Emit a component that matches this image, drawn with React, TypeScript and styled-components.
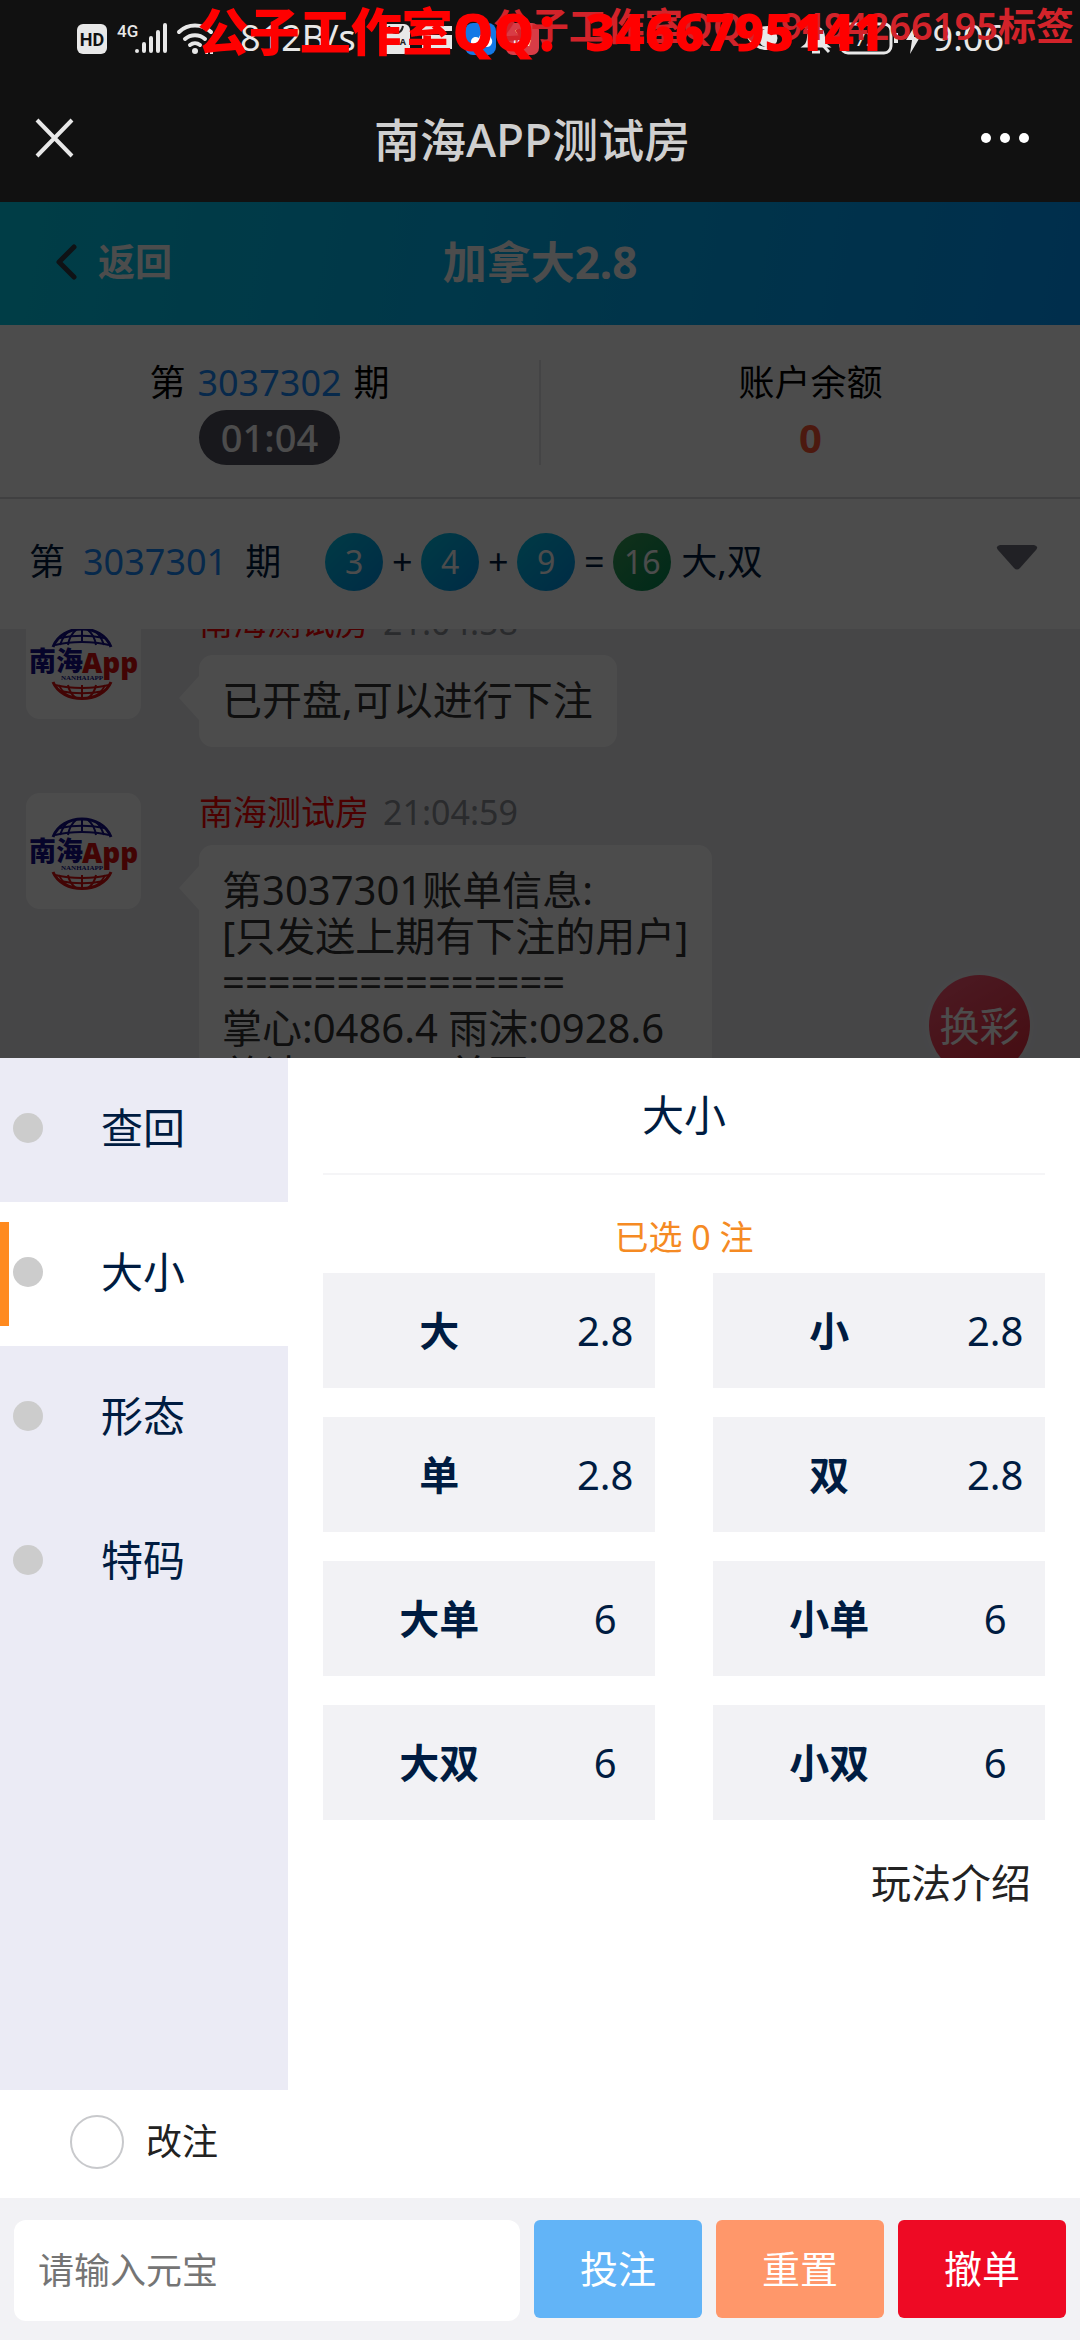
import React from 'react';
import styled, { createGlobalStyle } from 'styled-components';

const GlobalStyle = createGlobalStyle`
  * {
    box-sizing: border-box;
  }

  body {
    margin: 0;
    background: #fff;
    font-family: "Noto Sans", "Noto Sans CJK SC", sans-serif;
    color: #001c41;
  }

  button,
  input {
    font-family: inherit;
    border: 0;
    padding: 0;
    margin: 0;
  }

  button {
    background: none;
    color: inherit;
    cursor: pointer;
  }
`;

const Page = styled.div`
  position: relative;
  display: flex;
  flex-direction: column;
  min-height: 100vh;
`;

/* ---------- phone status bar + webview title ---------- */

const TopBar = styled.header`
  flex: none;
  background: #111;
  color: #e8e8e8;
`;

const StatusBar = styled.div`
  display: flex;
  justify-content: space-between;
  align-items: center;
  height: 76px;
  padding: 0 76px;
  font-size: 36px;
  line-height: 40px;
`;

const StatusGroup = styled.div<{ $gap: number }>`
  display: flex;
  align-items: center;
  gap: ${({ $gap }) => $gap}px;
`;

const Speed = styled.span`
  margin: 0 14px;
`;

const Watermark = styled.div<{ $main?: boolean }>`
  position: absolute;
  top: 0;
  right: ${({ $main }) => ($main ? 196 : 6)}px;
  font-size: ${({ $main }) => ($main ? 51 : 38)}px;
  font-weight: ${({ $main }) => ($main ? 900 : 600)};
  line-height: ${({ $main }) => ($main ? 62 : 50)}px;
  color: ${({ $main }) => ($main ? '#ff0000' : '#d2232a')};
  white-space: nowrap;
  pointer-events: none;
`;

const TitleBar = styled.div`
  display: grid;
  grid-template-columns: 1fr auto 1fr;
  align-items: center;
  height: 126px;
  padding: 0 50px 0 34px;

  button {
    height: 44px;
    line-height: 0;
  }

  button:first-child {
    justify-self: start;
  }

  button:last-child {
    justify-self: end;
  }
`;

const WebTitle = styled.h1`
  margin: 0;
  font-size: 46px;
  font-weight: 500;
  line-height: 60px;
  color: #cfcfcf;
`;

/* ---------- room behind the popup ---------- */

const Room = styled.main`
  position: relative;
  flex: 1 0 856px;
  height: 856px;
  display: flex;
  flex-direction: column;
  overflow: hidden;
`;

const Backdrop = styled.div`
  position: absolute;
  inset: 0;
  background: rgba(0, 0, 0, 0.7);
`;

const NavBar = styled.div`
  display: grid;
  grid-template-columns: 1fr auto 1fr;
  align-items: center;
  flex: none;
  height: 123px;
  padding: 0 54px 4px;
  color: #fff;
  background: linear-gradient(100deg, #00cdeb, #009bff);
`;

const BackButton = styled.button`
  display: flex;
  align-items: center;
  gap: 20px;
  font-size: 37px;
  font-weight: 700;
  line-height: 50px;
`;

const NavTitle = styled.h2`
  margin: 0;
  font-size: 44px;
  font-weight: 700;
  line-height: 60px;
`;

const InfoPanel = styled.section`
  display: flex;
  flex: none;
  height: 174px;
  padding: 35px 0 32px;
  background: #fff;
  border-bottom: 2px solid #d7d7da;
`;

const InfoCell = styled.div`
  flex: 1;
  display: flex;
  flex-direction: column;
  align-items: center;
  font-size: 36px;
  line-height: 46px;
  color: #000;

  & + & {
    border-left: 2px solid #e4e4e8;
  }
`;

const IssueNo = styled.span`
  margin: 0 12px;
  color: #1989fa;
`;

const Countdown = styled.time`
  margin-top: 4px;
  width: 141px;
  border-radius: 28px;
  background: #50505f;
  color: #fff;
  font-size: 38px;
  font-weight: 500;
  line-height: 55px;
  text-align: center;
`;

const Balance = styled.strong`
  margin-top: 4px;
  font-size: 40px;
  line-height: 55px;
  color: #ff5533;
`;

const ResultRow = styled.section`
  display: flex;
  align-items: center;
  flex: none;
  height: 130px;
  padding: 0 42px 4px 29px;
  background: #fff;
  font-size: 36px;
  line-height: 46px;

  ${IssueNo} {
    margin: 0 18px;
  }
`;

const Balls = styled.div`
  display: flex;
  align-items: center;
  margin-left: 44px;
`;

const Ball = styled.span<{ $sum?: boolean }>`
  width: 58px;
  border-radius: 50%;
  background: ${({ $sum }) =>
    $sum ? 'linear-gradient(135deg, #3ca35a, #008a55)' : 'linear-gradient(135deg, #00c3e6, #0091e6)'};
  color: #fff;
  font-size: 32px;
  line-height: 58px;
  text-align: center;
`;

const Operator = styled.span`
  width: 38px;
  text-align: center;
`;

const Verdict = styled.span`
  margin-left: 10px;
`;

const ExpandButton = styled.button`
  margin-left: auto;
  line-height: 0;
`;

const Chat = styled.section`
  flex: 1;
  min-height: 0;
  overflow: hidden;
  background: #ebebef;
`;

/* the list is scrolled a little below its first message */
const MessageList = styled.div`
  display: flex;
  flex-direction: column;
  gap: 46px;
  margin-top: -26px;
  padding: 0 26px;
`;

const MessageItem = styled.article`
  display: flex;
  align-items: flex-start;
  gap: 58px;
`;

const Avatar = styled.svg`
  flex: none;
  width: 115px;
  height: 116px;
  border-radius: 14px;
  background: #fff;
`;

const MessageMeta = styled.div`
  display: flex;
  gap: 14px;
  margin-bottom: 14px;
  font-size: 34px;
  line-height: 38px;
  color: #8c8f96;
`;

const Sender = styled.span`
  color: #ff0000;
`;

const Bubble = styled.div`
  position: relative;
  width: fit-content;
  padding: 22px 24px 24px 23px;
  border-radius: 14px;
  background: #fff;
  color: #323233;
  font-size: 40px;
  line-height: 46px;
  white-space: pre;

  &::before {
    content: "";
    position: absolute;
    left: -20px;
    top: 21px;
    border: solid transparent;
    border-width: 22px 20px 22px 0;
    border-right-color: #fff;
  }
`;

const SwitchButton = styled.button`
  position: absolute;
  right: 50px;
  top: 773px;
  width: 101px;
  height: 101px;
  border-radius: 50%;
  background: linear-gradient(150deg, #ff5a78, #e62837);
  box-shadow: 0 0 20px rgba(255, 255, 255, 0.3);
  color: #fff;
  font-size: 40px;
  line-height: 98px;
`;

/* ---------- betting popup ---------- */

const Sheet = styled.section`
  flex: none;
  background: #fff;
`;

const SheetBody = styled.div`
  display: flex;
  min-height: 1032px;
`;

const Menu = styled.nav`
  flex: none;
  width: 288px;
  background: #ebebf5;
`;

const MenuItem = styled.button<{ $active?: boolean }>`
  position: relative;
  display: flex;
  align-items: center;
  gap: 58px;
  width: 100%;
  height: 144px;
  padding: 0 0 4px 13px;
  background: ${({ $active }) => ($active ? '#fff' : 'transparent')};
  font-size: 42px;
  line-height: 56px;

  &::before {
    content: "";
    width: 30px;
    height: 30px;
    border-radius: 50%;
    background: #ccc;
  }

  &::after {
    content: "";
    position: absolute;
    left: 0;
    top: 20px;
    width: 9px;
    height: 104px;
    background: ${({ $active }) => ($active ? '#ff8a1f' : 'transparent')};
  }
`;

const Panel = styled.div`
  flex: 1;
  display: flex;
  flex-direction: column;
  padding: 0 35px;
`;

const PanelTitle = styled.h3`
  margin: 0;
  padding-bottom: 2px;
  border-bottom: 2px solid #f5f5f7;
  font-size: 42px;
  font-weight: 400;
  line-height: 113px;
  text-align: center;
`;

const Selected = styled.p`
  margin: 40px 0 14px;
  font-size: 34px;
  line-height: 44px;
  text-align: center;
  color: #f58a23;
`;

const OddsGrid = styled.div`
  display: grid;
  grid-template-columns: 1fr 1fr;
  gap: 29px 58px;
`;

const OddsButton = styled.button`
  display: grid;
  grid-template-columns: 7fr 3fr;
  align-items: center;
  height: 115px;
  background: #f2f2f5;
  font-size: 40px;
  line-height: 52px;
`;

const RulesLink = styled.a`
  align-self: flex-end;
  margin: 37px 14px 0;
  font-size: 40px;
  line-height: 52px;
  color: #222;
  text-decoration: none;
`;

const EditOption = styled.label`
  display: flex;
  align-items: center;
  gap: 22px;
  width: fit-content;
  height: 108px;
  padding: 0 0 4px 70px;
  font-size: 36px;
  line-height: 46px;
  color: #222;

  input {
    appearance: none;
    width: 54px;
    height: 54px;
    border: 2px solid #c8c9cc;
    border-radius: 50%;
  }

  input:checked {
    background: #1989fa;
  }
`;

const ActionBar = styled.form`
  display: flex;
  gap: 14px;
  height: 142px;
  padding: 22px 14px 19px;
  background: #f2f2f5;
`;

const AmountInput = styled.input`
  flex: 1;
  min-width: 0;
  padding: 0 24px;
  border-radius: 12px;
  background: #fff;
  font-size: 36px;

  &::placeholder {
    color: #757575;
  }
`;

const ActionButton = styled.button<{ $color: string }>`
  flex: none;
  width: 168px;
  height: 98px;
  padding-bottom: 6px;
  border-radius: 6px;
  background: ${({ $color }) => $color};
  color: #fff;
  font-size: 38px;
`;

const menu = ['查回', '大小', '形态', '特码'];

const odds = [
  ['大', '2.8'],
  ['小', '2.8'],
  ['单', '2.8'],
  ['双', '2.8'],
  ['大单', '6'],
  ['小单', '6'],
  ['大双', '6'],
  ['小双', '6'],
];

const messages = [
  { time: '21:04:58', text: '已开盘,可以进行下注' },
  {
    time: '21:04:59',
    text: '第3037301账单信息:\n[只发送上期有下注的用户]\n===============\n掌心:0486.4 雨沫:0928.6\n总计:1415.0 首页',
  },
];

const SignalIcons = () => (
  <svg width="140" height="36" viewBox="0 0 140 36" fill="#e8e8e8">
    <rect x="1" y="4" width="30" height="30" rx="6" />
    <text x="16" y="26" fontSize="18" fontFamily="Roboto" fontWeight="700" fill="#111" textAnchor="middle">HD</text>
    <text x="41" y="17" fontSize="17" fontFamily="Roboto" fontWeight="500">4G</text>
    <g stroke="#e8e8e8" strokeWidth="4" strokeLinecap="round">
      <path d="M61 31v0M68 31v-7M75 31v-13M82 31v-19M89 31V5" />
    </g>
    <g fill="none" stroke="#e8e8e8" strokeWidth="4" strokeLinecap="round">
      <path d="M103 12a23 23 0 0 1 32 0" />
      <path d="M109 19a15 15 0 0 1 20 0" />
      <path d="M114 25a8 8 0 0 1 10 0" />
    </g>
    <circle cx="119" cy="31" r="3" />
    <path d="M129 34v-6h3v6zM134 34v-9h3v9z" />
  </svg>
);

const AppIcons = () => (
  <svg width="160" height="36" viewBox="0 0 160 36">
    <rect x="1" y="4" width="29" height="30" rx="6" fill="#e8e8e8" />
    <path d="M9 6c1 5 4 7 7 7s6-2 7-7" fill="none" stroke="#222" strokeWidth="2" />
    <text x="16" y="25" fontSize="9" fontWeight="700" fill="#222" textAnchor="middle">HUA</text>
    <path d="M42 6h30v5H42zM42 15h30v14H62l-5 5-3-5H42z" fill="#e8e8e8" />
    <rect x="85" y="3" width="31" height="32" rx="8" fill="#1478e6" />
    <path d="M91 22c0-5 5-6 8-4 1-6 10-8 12 0 3 4 0 9-4 9H95c-3 0-4-2-4-5z" fill="#fff" />
    <rect x="126" y="3" width="33" height="32" rx="7" fill="#d83c46" />
    <path d="M136 10c2 5 11 5 13 0" fill="none" stroke="#fff" strokeWidth="2" />
    <text x="142" y="26" fontSize="9" fontWeight="700" fill="#fff" textAnchor="middle">JAW</text>
  </svg>
);

const SystemIcons = () => (
  <svg width="176" height="36" viewBox="0 0 176 36" fill="none" stroke="#e8e8e8" strokeWidth="3">
    <path d="M2 18c8-14 30-14 38 0-8 14-30 14-38 0z" />
    <circle cx="21" cy="18" r="8" fill="#e8e8e8" />
    <path d="M58 26c4-3 3-8 4-12 2-8 12-8 14 0 1 4 0 9 4 12z" fill="#e8e8e8" />
    <path d="M65 32h8M56 4l26 28" />
    <rect x="94" y="4" width="50" height="29" rx="7" />
    <path d="M149 13v10" strokeWidth="4" />
    <path d="M169 4l-10 16h6l-2 14 10-17h-6z" fill="#e8e8e8" stroke="none" />
    <text x="119" y="26" fontSize="20" fill="#e8e8e8" stroke="none" textAnchor="middle">72</text>
  </svg>
);

const RoomLogo = () => (
  <Avatar viewBox="0 0 115 116" role="img" aria-label="南海App">
    <g fill="none" stroke="#14108c" strokeWidth="2">
      <path d="M27 44C36 20 76 20 85 44" strokeWidth="3" />
      <path d="M34 35c14-3 30-3 44 0M29 42c16-4 38-4 54 0" />
      <path d="M56 26v14M50 27c-5 4-7 9-8 15M62 27c5 4 7 9 8 15M42 29c-5 4-6 8-8 13M70 29c5 4 6 8 8 13" />
    </g>
    <g fill="none" stroke="#dc0f0f" strokeWidth="2">
      <path d="M27 79c9 22 49 22 58 0" strokeWidth="3" />
      <path d="M29 82c16 4 38 4 54 0M34 88c14 3 30 3 44 0" />
      <path d="M56 82v14M42 82c1 6 4 10 8 13M70 82c-1 6-4 10-8 13M33 82c2 5 5 8 9 11M79 82c-2 5-5 8-9 11" />
    </g>
    <text x="3" y="68" fontSize="27" fontWeight="900" fill="#14108c">南海</text>
    <text x="56" y="70" fontSize="28" fontWeight="900" fill="#dc0f0f">App</text>
    <text x="35" y="77" fontSize="7" fontWeight="700" fontFamily="Liberation Serif" fill="#14108c">NANHAIAPP</text>
  </Avatar>
);

const App: React.FunctionComponent = () => {
  const [active, setActive] = React.useState('大小');

  return (
    <Page>
      <GlobalStyle />
      <TopBar>
        <StatusBar>
          <StatusGroup $gap={10}>
            <SignalIcons />
            <Speed>812B/s</Speed>
            <AppIcons />
          </StatusGroup>
          <StatusGroup $gap={10}>
            <SystemIcons />
            <span>9:06</span>
          </StatusGroup>
        </StatusBar>
        <TitleBar>
          <button type="button" aria-label="关闭">
            <svg width="40" height="44" viewBox="0 0 40 44" stroke="#e8e8e8" strokeWidth="4">
              <path d="M3 3l35 36M38 3L3 39" />
            </svg>
          </button>
          <WebTitle>南海APP测试房</WebTitle>
          <button type="button" aria-label="更多">
            <svg width="50" height="44" viewBox="0 0 50 44" fill="#fff">
              <circle cx="6" cy="21" r="5" />
              <circle cx="25" cy="21" r="5" />
              <circle cx="44" cy="21" r="5" />
            </svg>
          </button>
        </TitleBar>
      </TopBar>
      <Watermark>公子工作室QQ：9494266195标签</Watermark>
      <Watermark $main>公子工作室QQ：3466795141</Watermark>

      <Room>
        <NavBar>
          <BackButton type="button">
            <svg width="24" height="38" viewBox="0 0 24 38" fill="none" stroke="#323c46" strokeWidth="5" strokeLinecap="round" strokeLinejoin="round">
              <path d="M20 4L5 19l15 15" />
            </svg>
            返回
          </BackButton>
          <NavTitle>加拿大2.8</NavTitle>
        </NavBar>
        <InfoPanel>
          <InfoCell>
            <div>第<IssueNo>3037302</IssueNo>期</div>
            <Countdown>01:04</Countdown>
          </InfoCell>
          <InfoCell>
            <div>账户余额</div>
            <Balance>0</Balance>
          </InfoCell>
        </InfoPanel>
        <ResultRow>
          <span>第</span>
          <IssueNo>3037301</IssueNo>
          <span>期</span>
          <Balls>
            <Ball>3</Ball>
            <Operator>+</Operator>
            <Ball>4</Ball>
            <Operator>+</Operator>
            <Ball>9</Ball>
            <Operator>=</Operator>
            <Ball $sum>16</Ball>
          </Balls>
          <Verdict>大,双</Verdict>
          <ExpandButton type="button" aria-label="展开">
            <svg width="42" height="34" viewBox="0 0 42 34" fill="#70707c">
              <path d="M4 0h34q5 1 2 5L24 23q-3 3-6 0L2 5q-3-4 2-5z" />
            </svg>
          </ExpandButton>
        </ResultRow>
        <Chat>
          <MessageList>
            {messages.map((message) => (
              <MessageItem key={message.time}>
                <RoomLogo />
                <div>
                  <MessageMeta>
                    <Sender>南海测试房</Sender>
                    <span>{message.time}</span>
                  </MessageMeta>
                  <Bubble>{message.text}</Bubble>
                </div>
              </MessageItem>
            ))}
          </MessageList>
        </Chat>
        <SwitchButton type="button">换彩</SwitchButton>
        <Backdrop />
      </Room>

      <Sheet>
        <SheetBody>
          <Menu>
            {menu.map((name) => (
              <MenuItem key={name} type="button" $active={name === active} onClick={() => setActive(name)}>
                {name}
              </MenuItem>
            ))}
          </Menu>
          <Panel>
            <PanelTitle>{active}</PanelTitle>
            <Selected>已选 0 注</Selected>
            <OddsGrid>
              {odds.map(([name, value]) => (
                <OddsButton key={name} type="button">
                  <strong>{name}</strong>
                  <span>{value}</span>
                </OddsButton>
              ))}
            </OddsGrid>
            <RulesLink href="#rules">玩法介绍</RulesLink>
          </Panel>
        </SheetBody>
        <EditOption>
          <input type="radio" name="edit" />
          改注
        </EditOption>
        <ActionBar onSubmit={(e) => e.preventDefault()}>
          <AmountInput type="text" placeholder="请输入元宝" aria-label="请输入元宝" />
          <ActionButton type="submit" $color="#62b4f7">投注</ActionButton>
          <ActionButton type="reset" $color="#ff976a">重置</ActionButton>
          <ActionButton type="button" $color="#ee0a24">撤单</ActionButton>
        </ActionBar>
      </Sheet>
    </Page>
  );
};

export default App;
